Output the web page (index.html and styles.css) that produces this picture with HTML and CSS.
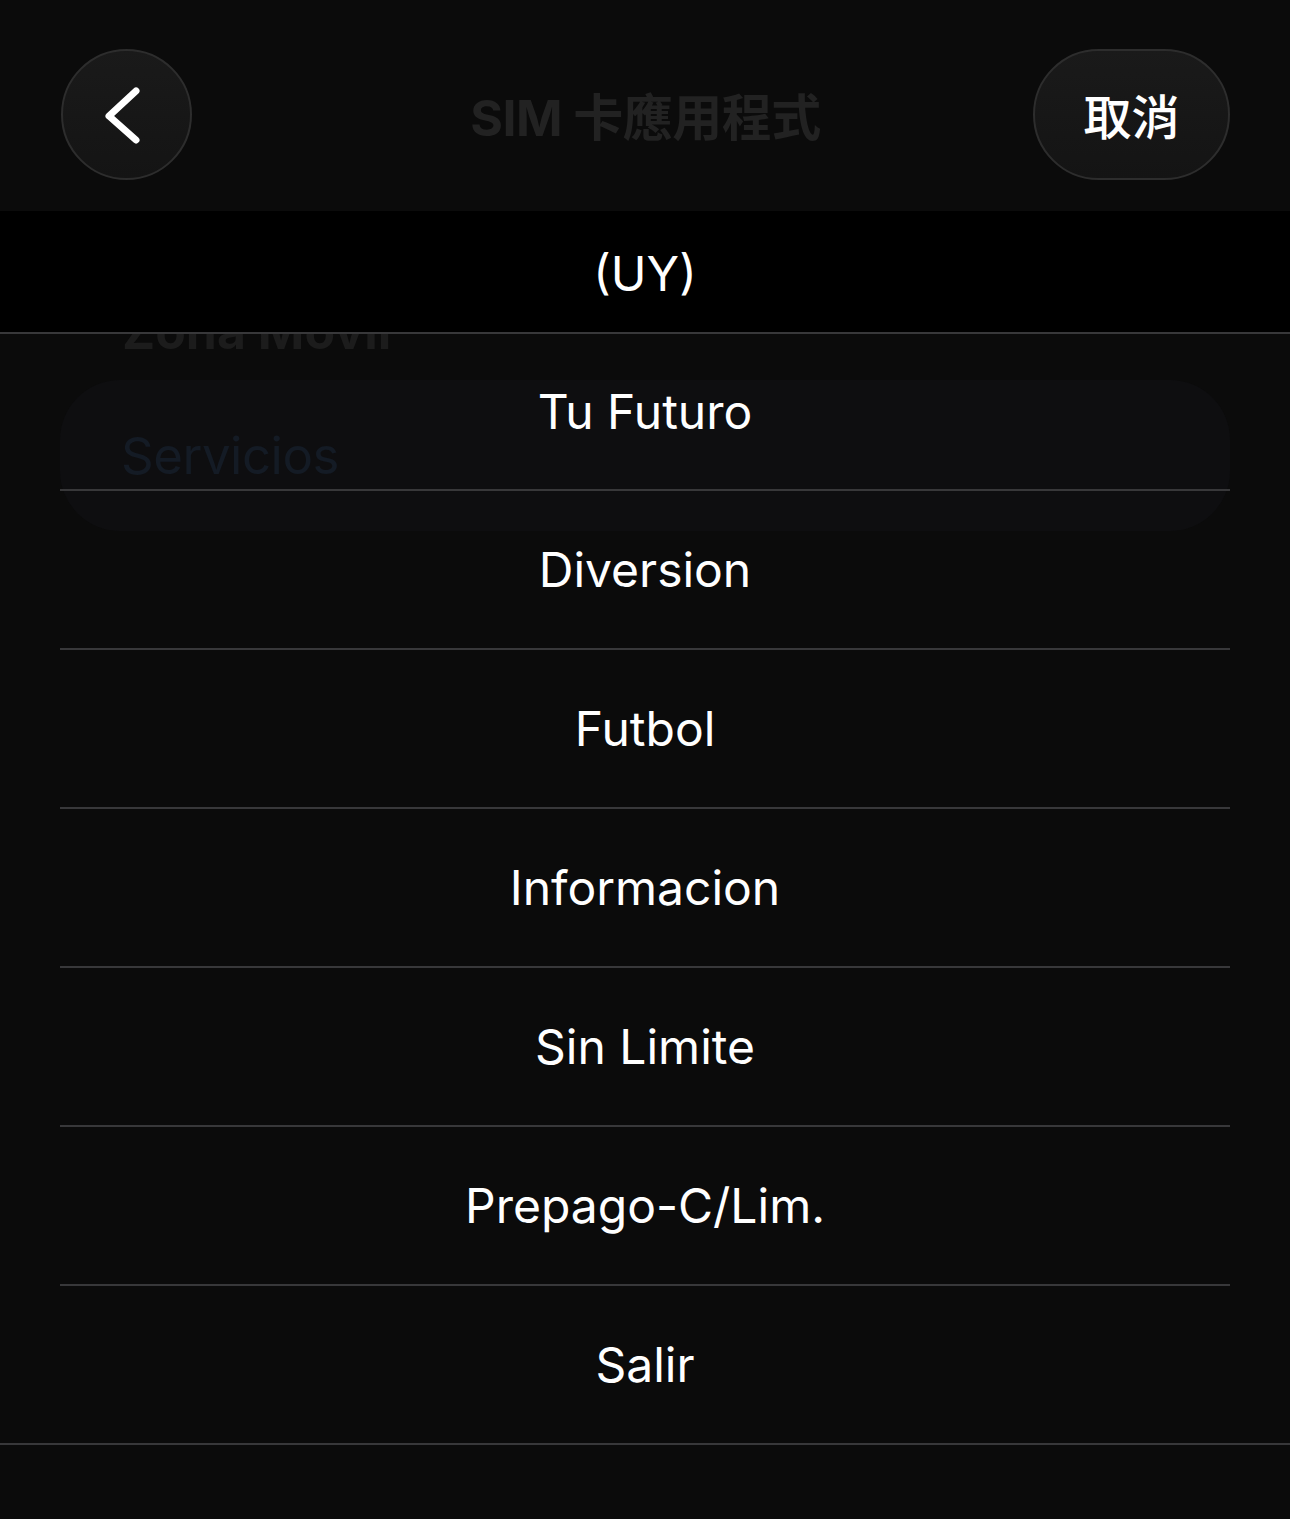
FILE: index.html
```html
<!DOCTYPE html>
<html lang="zh-Hant">
<head>
  <meta charset="UTF-8">
  <meta name="viewport" content="width=device-width, initial-scale=1.0">
  <title>SIM卡應用程式</title>
  <link rel="stylesheet" href="styles.css">
</head>
<body>
  <header class="nav">
    <button class="back" aria-label="Back">
      <svg width="130" height="130" viewBox="0 0 130 130">
        <path d="M74 41 L47 66 L74 90" fill="none" stroke="#fff" stroke-width="7" stroke-linecap="round" stroke-linejoin="round"/>
      </svg>
    </button>
    <h1 class="title">SIM 卡應用程式</h1>
    <button class="cancel">取消</button>
  </header>

  <div class="sheet">
    <!-- the page behind the menu, seen through it -->
    <div class="ghost">
      <div class="ghost-head">Zona Movil</div>
      <div class="ghost-card">Servicios</div>
    </div>

    <div class="bar">(UY)</div>

    <ul class="menu">
      <li>Tu Futuro</li>
      <li>Diversion</li>
      <li>Futbol</li>
      <li>Informacion</li>
      <li>Sin Limite</li>
      <li>Prepago-C/Lim.</li>
      <li>Salir</li>
    </ul>
  </div>
</body>
</html>
```

FILE: styles.css
```css
* {
  margin: 0;
  padding: 0;
  box-sizing: border-box;
}

html, body {
  background-color: #0b0b0b;
}

body {
  width: 1290px;
  min-height: 1519px;
  font-family: Inter, "Noto Sans", "Noto Sans CJK TC", sans-serif;
  color: #fff;
}

.nav {
  height: 211px;
  display: grid;
  grid-template-columns: 1fr auto 1fr;
  align-items: center;
  padding: 18px 60px 0 61px;
}

.back,
.cancel {
  height: 131px;
  background: linear-gradient(180deg, #1a1a1a, #141414);
  border: 2px solid #2d2d2d;
  color: #fff;
  font-family: inherit;
}

.back {
  width: 131px;
  border-radius: 50%;
  display: flex;
  align-items: center;
  justify-content: center;
  justify-self: start;
}

.back svg {
  display: block;
  margin: -2px;
}

.cancel {
  width: 197px;
  border-radius: 66px;
  justify-self: end;
  font-family: "Noto Sans CJK TC", sans-serif;
  font-size: 48px;
  font-weight: 500;
  padding-bottom: 2px;
}

.title {
  text-align: center;
  font-family: Inter, "Noto Sans CJK TC", sans-serif;
  font-size: 50px;
  font-weight: 700;
  color: #222;
  letter-spacing: -0.5px;
  padding-bottom: 2px;
}

.sheet {
  position: relative;
}

.ghost {
  position: absolute;
  top: 0;
  left: 0;
  right: 0;
  padding-top: 95px;
}

.ghost-head {
  padding-left: 122px;
  font-size: 50px;
  font-weight: 700;
  line-height: 1;
  color: #1c1c1c;
}

.ghost-card {
  margin: 24px 60px 0;
  height: 151px;
  border-radius: 60px;
  background-color: #0e0e10;
  padding: 50px 0 0 61px;
  font-size: 51px;
  line-height: 1;
  color: #141b25;
  letter-spacing: -0.5px;
}

.bar {
  position: relative;
  height: 123px;
  background-color: #000;
  border-bottom: 2px solid #38383a;
  display: flex;
  align-items: center;
  justify-content: center;
  font-size: 48px;
  padding-top: 3px;
}

.menu {
  position: relative;
  list-style-type: none;
  border-bottom: 2px solid #38383a;
}

.menu li {
  height: 159px;
  margin: 0 60px;
  border-bottom: 2px solid #38383a;
  display: flex;
  align-items: center;
  justify-content: center;
  font-size: 48px;
}

.menu li:first-child {
  height: 157px;
}

.menu li:last-child {
  height: 157px;
  border-bottom: none;
}
```
